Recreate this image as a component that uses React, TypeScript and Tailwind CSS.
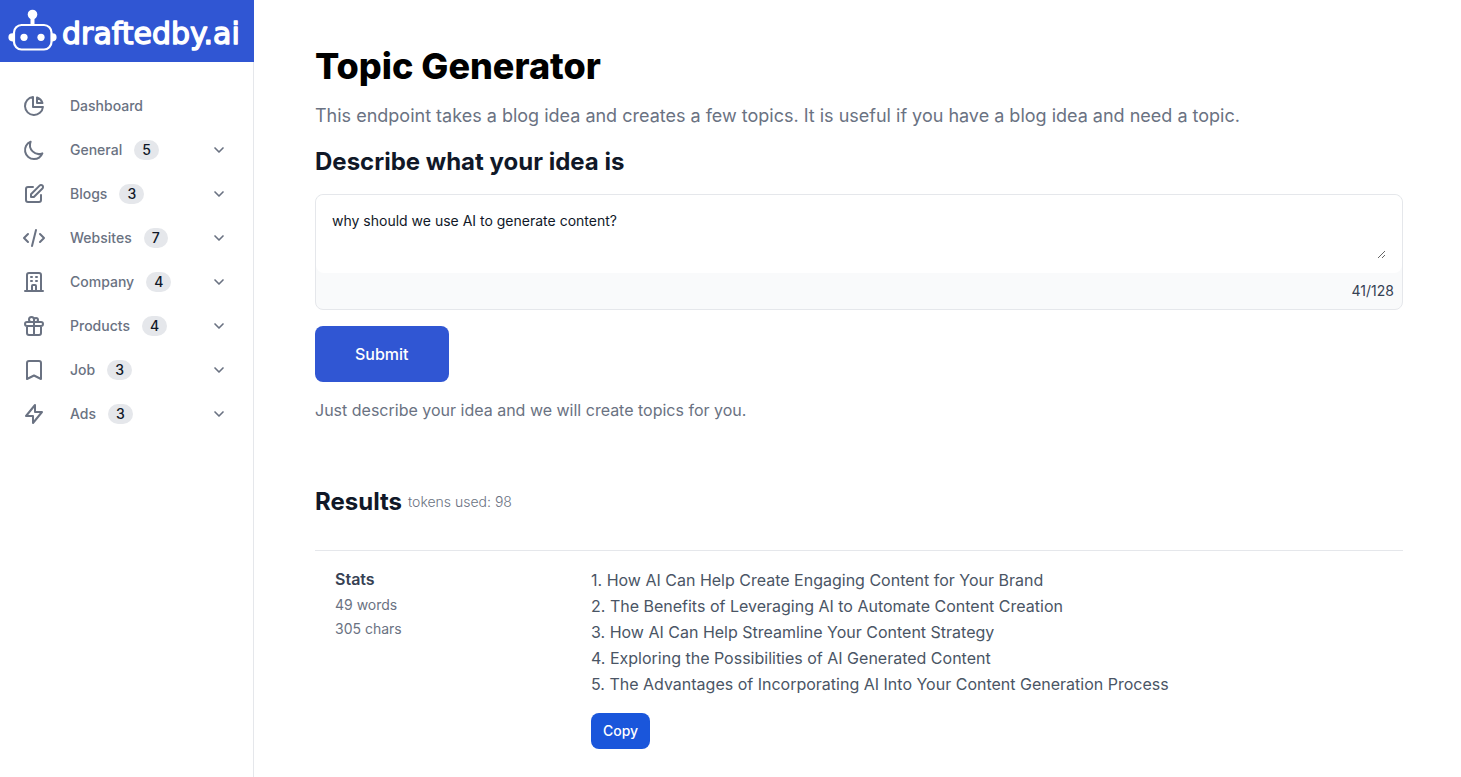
import React, { useState } from 'react';
import type { IconType } from 'react-icons';
import { ChevronDown } from 'lucide-react';
import {
  HiOutlineBookmark,
  HiOutlineChartPie,
  HiOutlineCode,
  HiOutlineGift,
  HiOutlineLightningBolt,
  HiOutlineMoon,
  HiOutlineOfficeBuilding,
  HiOutlinePencilAlt
} from 'react-icons/hi';

interface NavItem {
  label: string;
  icon: IconType;
  count?: number;
}

const NAV_ITEMS: NavItem[] = [
  { label: 'Dashboard', icon: HiOutlineChartPie },
  { label: 'General', icon: HiOutlineMoon, count: 5 },
  { label: 'Blogs', icon: HiOutlinePencilAlt, count: 3 },
  { label: 'Websites', icon: HiOutlineCode, count: 7 },
  { label: 'Company', icon: HiOutlineOfficeBuilding, count: 4 },
  { label: 'Products', icon: HiOutlineGift, count: 4 },
  { label: 'Job', icon: HiOutlineBookmark, count: 3 },
  { label: 'Ads', icon: HiOutlineLightningBolt, count: 3 }
];

const TOPICS = [
  'How AI Can Help Create Engaging Content for Your Brand',
  'The Benefits of Leveraging AI to Automate Content Creation',
  'How AI Can Help Streamline Your Content Strategy',
  'Exploring the Possibilities of AI Generated Content',
  'The Advantages of Incorporating AI Into Your Content Generation Process'
];

const MAX_LENGTH = 128;

function Logo() {
  return (
    <svg width="254" height="62" viewBox="0 0 254 62" role="img" aria-label="draftedby.ai">
      <g fill="#fff">
        <circle cx="32.5" cy="14.5" r="4.8" />
        <rect x="30.5" y="16" width="4" height="9" />
        <circle cx="24" cy="37.3" r="3.6" />
        <circle cx="41" cy="37.3" r="3.6" />
        <path d="M14 33.2h-1.5a4.1 4.1 0 0 0 0 8.2H14z" />
        <path d="M51 33.2h1.5a4.1 4.1 0 0 1 0 8.2H51z" />
      </g>
      <rect x="14" y="25" width="37.5" height="24.5" rx="7.5" fill="none" stroke="#fff" strokeWidth="2.2" />
      <text
        x="62"
        y="44"
        fill="#fff"
        stroke="#fff"
        strokeWidth="1.4"
        strokeLinejoin="round"
        className="font-['DejaVu_Sans',sans-serif] text-[30px] font-normal"
      >
        draftedby.ai
      </text>
    </svg>
  );
}

function Sidebar() {
  return (
    <aside className="w-[254px] shrink-0 border-r border-gray-200">
      <a href="#" className="block h-[62px] w-[254px] bg-[#3056d3]">
        <Logo />
      </a>
      <nav className="pt-[22px]">
        <ul>
          {NAV_ITEMS.map(({ label, icon: Icon, count }) => (
            <li key={label}>
              <button className="flex h-11 w-full items-center pl-[22px] pr-[26px] text-sm font-medium text-gray-500">
                <Icon size={24} />
                <span className="ml-6">{label}</span>
                {count !== undefined && (
                  <>
                    <span className="ml-3 rounded-full bg-gray-200 px-2 text-gray-900">{count}</span>
                    <ChevronDown size={16} strokeWidth={2.5} className="ml-auto" />
                  </>
                )}
              </button>
            </li>
          ))}
        </ul>
      </nav>
    </aside>
  );
}

export default function App() {
  const [idea, setIdea] = useState('why should we use AI to generate content?');

  const handleCopy = () => {
    navigator.clipboard?.writeText(TOPICS.map((t, i) => `${i + 1}. ${t}`).join('\n'));
  };

  return (
    <div className="flex min-h-screen bg-white font-['Inter',sans-serif] text-gray-900">
      <Sidebar />

      <main className="min-w-0 flex-1 pb-7 pl-[61px] pr-[58px] pt-[42px]">
        <h1 className="text-4xl font-extrabold leading-12 text-black">Topic Generator</h1>
        <p className="mt-3 text-lg text-gray-500">
          This endpoint takes a blog idea and creates a few topics. It is useful if you have a blog idea and need a topic.
        </p>

        <form onSubmit={(e) => e.preventDefault()}>
          <label htmlFor="idea" className="mt-4 block text-2xl font-bold">
            Describe what your idea is
          </label>
          <div className="mt-4 rounded-lg border border-gray-200 bg-gray-50">
            <div className="rounded-lg bg-white px-4 pb-3.5 pt-4">
              <textarea
                id="idea"
                rows={2}
                maxLength={MAX_LENGTH}
                value={idea}
                onChange={(e) => setIdea(e.target.value)}
                className="block h-12 w-full text-sm outline-none"
              />
            </div>
            <div className="px-2 py-2 text-right text-sm text-gray-700">
              {idea.length}/{MAX_LENGTH}
            </div>
          </div>
          <button type="submit" className="mt-4 h-14 rounded-lg bg-[#3056d3] px-10 font-medium text-white">
            Submit
          </button>
        </form>
        <p className="mt-4 text-gray-500">Just describe your idea and we will create topics for you.</p>

        <div className="mt-16 flex items-center gap-1.5">
          <h2 className="text-2xl font-bold">Results</h2>
          <span className="text-sm font-light text-gray-500">tokens used: 98</span>
        </div>

        <section className="mt-8 flex border-t border-gray-200 px-5 pt-4">
          <div className="w-64 shrink-0">
            <h3 className="font-semibold text-gray-700">Stats</h3>
            <p className="mt-0.5 text-sm leading-6 text-gray-500">49 words</p>
            <p className="text-sm leading-6 text-gray-500">305 chars</p>
          </div>
          <div>
            {TOPICS.map((topic, i) => (
              <p key={topic} className="leading-[26px] text-gray-600">
                {i + 1}. {topic}
              </p>
            ))}
            <button
              onClick={handleCopy}
              className="mt-4 h-9 rounded-lg bg-[#1a56db] px-3 text-sm font-medium text-white"
            >
              Copy
            </button>
          </div>
        </section>
      </main>
    </div>
  );
}
